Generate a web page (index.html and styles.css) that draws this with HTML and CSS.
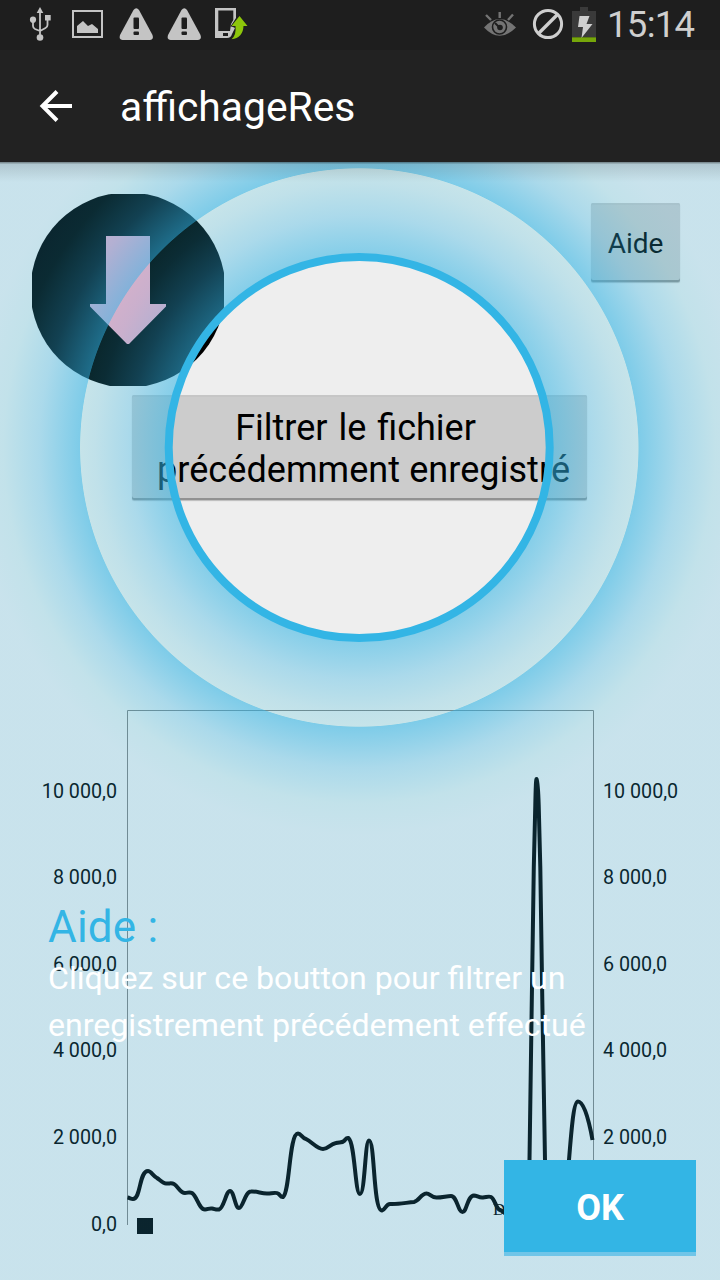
FILE: index.html
```html
<!DOCTYPE html>
<html lang="fr">
<head>
<meta charset="utf-8">
<title>affichageRes</title>
<link rel="stylesheet" href="styles.css">
</head>
<body>
<header class="status">
  <svg class="status-icons" viewBox="0 0 260 50" width="260" height="50">
    <g fill="none" stroke="#c4c4c4" stroke-width="1.8">
      <path d="M40 12V37M33 21V26Q33 28 35 29L40 31M47.500 20V25Q47.500 27 45.500 28L40 31"/>
    </g>
    <g fill="#c4c4c4">
      <path d="M40 7L43.300 13H36.700Z"/><circle cx="33" cy="19.700" r="3.100"/><rect x="45" y="15" width="5.700" height="5.500"/><circle cx="40" cy="37.500" r="3.300"/>
      <path d="M77 33V26L83 21L88 26L92 24L98 29V33Z"/>
      <path d="M133.500 10Q136.300 6.500 139 10L152.500 35Q154 39.500 150 40H122.500Q118.500 39.500 120 35Z"/>
      <path d="M181.500 10Q184.300 6.500 187 10L200.500 35Q202 39.500 198 40H170.500Q166.500 39.500 168 35Z"/>
      <path fill-rule="evenodd" d="M215 8H236V18L231 26L235 28L232 34Q231 38 227 38H215ZM218.300 10.500V31H230L231 24L233.300 20V10.500ZM223 33V36H228V33Z"/>
    </g>
    <rect x="73" y="11" width="29" height="26" fill="none" stroke="#c4c4c4" stroke-width="2"/>
    <g fill="#1e1e1e"><rect x="133.500" y="17.500" width="5.500" height="11.500" rx="1"/><rect x="133.500" y="31.500" width="5.500" height="3.500" rx="1"/><rect x="181.500" y="17.500" width="5.500" height="11.500" rx="1"/><rect x="181.500" y="31.500" width="5.500" height="3.500" rx="1"/></g>
    <path d="M239.500 16L247.500 26H243.500Q243 38 231.500 39.300Q236.500 35 235.500 26H231.500Z" fill="#8dc60b" stroke="#1e1e1e" stroke-width="1.200" paint-order="stroke"/>
  </svg>
  <svg class="status-icons" viewBox="480 0 120 50" width="120" height="50">
    <path d="M484 27.500Q499.500 10.500 516 27.500Q499.500 44 484 27.500Z" fill="#747474"/>
    <circle cx="499.500" cy="27" r="7" fill="none" stroke="#1e1e1e" stroke-width="1.600"/>
    <circle cx="500" cy="27.500" r="2.800" fill="#1e1e1e"/>
    <path d="M495 23L499 27" stroke="#1e1e1e" stroke-width="2"/>
    <path d="M486 15L491 20M499.700 12V18M513 14.500L508 20" stroke="#747474" stroke-width="2.400"/>
    <circle cx="548" cy="24" r="13.600" fill="none" stroke="#cfcfcf" stroke-width="3"/>
    <path d="M538.500 33.500L557.500 14.500" stroke="#cfcfcf" stroke-width="3.400"/>
    <path d="M572 11H580V7H588V11H596V37H572Z" fill="#3a3a3a"/>
    <rect x="572" y="37.300" width="24" height="4.700" fill="#76a60a"/>
    <path d="M579.500 16H589.500L586.500 24H592.500L581.500 38L583 27H578Z" fill="#cfcfcf"/>
  </svg>
  <span class="clock">15:14</span>
</header>
<nav class="actionbar">
  <svg class="back" viewBox="0 0 36 36" width="36" height="36"><path d="M35 18H6M20 3.500L5.500 18L20 32.500" fill="none" stroke="#fff" stroke-width="4"/></svg>
  <h1 class="title">affichageRes</h1>
</nav>
<main class="screen">
  <div class="tools">
    <svg class="download" viewBox="0 0 192 192" width="192" height="192">
      <circle cx="96" cy="96" r="97.500" fill="#000"/>
      <path d="M74 42H118V110H134V112.500L97 150H95L58 112.500V110H74Z" fill="#fbadc8"/>
    </svg>
    <button class="btn btn-help">Aide</button>
  </div>
  <button class="btn btn-filter"><span class="line line-first">Filtrer le fichier</span><span class="line">précédemment enregistré</span></button>
  <svg class="chart" viewBox="0 700 720 580" width="720" height="580">
    <text class="tick end" x="117" y="798">10 000,0</text><text class="tick" x="603" y="798">10 000,0</text>
    <text class="tick end" x="117" y="884">8 000,0</text><text class="tick" x="603" y="884">8 000,0</text>
    <text class="tick end" x="117" y="971">6 000,0</text><text class="tick" x="603" y="971">6 000,0</text>
    <text class="tick end" x="117" y="1057">4 000,0</text><text class="tick" x="603" y="1057">4 000,0</text>
    <text class="tick end" x="117" y="1144">2 000,0</text><text class="tick" x="603" y="1144">2 000,0</text>
    <text class="tick end" x="117" y="1231">0,0</text>
    <path class="frame" d="M127.500 1225V710.500H593.500V1225"/>
    <rect x="137" y="1218" width="16" height="16"/>
    <text class="caption" x="493" y="1215">D</text>
    <path class="series" d="M127.500 1197.500C130 1198 131 1199 133 1199C141 1199 139 1171 148 1171C151 1171 153 1176 157 1178C160 1180 163 1183.500 166 1183.500C169 1184 171 1182.500 174 1184C178 1186 180 1193 185 1193C188 1193 189 1191.500 192 1193C197 1196 199 1209.500 205 1209.500C208 1209.500 209 1208 212 1208.500C215 1209 216 1210 219 1209.500C224 1208 226 1191 230 1191C234 1191 235 1208 239 1208C243 1208 245 1191.500 251 1191.500C257 1191 262 1194 268 1193.500C271 1193.500 276 1192 278 1193.500C280 1194.500 280.500 1197.500 283 1197C290 1192 289 1133.500 298 1133.500C301 1133.500 302 1138 306 1139C312 1142 317 1149 323 1149C328 1149 330 1144 336 1143C339 1142 342 1143 344 1141C346 1139 346 1137.500 348.500 1138C355 1143 355 1194 360 1194C365 1194 365 1140.500 369 1140.500C375 1140.500 373 1211 382 1210.500C385 1210 386 1204 390 1204C398 1204.500 407 1202.500 414 1202C419 1201 421 1194 426 1193.500C430 1193 431 1198 437 1197.500C442 1197.500 447 1196 451 1196C457 1196 458 1212 462.500 1212C467 1212 467 1196 474 1195.500C477 1195.500 479 1198 483 1197.500C487 1197 489 1196 491 1197C495 1199 496 1209 500 1210C512 1214 524 1250 529.500 1160L531.800 1000L533.800 867L535.300 805Q535.800 779 536.500 779Q538 783 538.700 805L540.300 867L542.300 1000L545 1160C550 1270 562 1240 569 1160C572 1122 574 1101.500 578 1101.500C583 1101.500 588 1115 592.500 1140"/>
  </svg>
  <svg class="showcase" viewBox="0 162 720 1118" width="720" height="1118">
    <defs>
      <linearGradient id="shade" x1="0" y1="0" x2="0" y2="1"><stop offset="0" stop-color="#000" stop-opacity=".45"/><stop offset=".12" stop-color="#000" stop-opacity=".12"/><stop offset="1" stop-color="#000" stop-opacity="0"/></linearGradient>
      <radialGradient id="glow" gradientUnits="userSpaceOnUse" cx="359.300" cy="447.500" r="400">
        <stop offset=".475" stop-color="#33b5e5" stop-opacity=".58"/>
        <stop offset=".58" stop-color="#33b5e5" stop-opacity=".36"/>
        <stop offset=".66" stop-color="#2fb8dc" stop-opacity=".24"/>
        <stop offset=".697" stop-color="#2fbcd8" stop-opacity=".21"/>
        <stop offset=".699" stop-color="#33b5e5" stop-opacity=".6"/>
        <stop offset=".8" stop-color="#33b5e5" stop-opacity=".36"/>
        <stop offset=".89" stop-color="#2fb9dd" stop-opacity=".23"/>
        <stop offset=".97" stop-color="#33b5e5" stop-opacity=".2"/>
      </radialGradient>
    </defs>
    <path fill="url(#glow)" fill-rule="evenodd" d="M0 162H720V1280H0ZM168 447.500A191 191 0 0 0 550 447.500A191 191 0 0 0 168 447.500Z"/>
    <circle cx="359.200" cy="447.600" r="190.500" fill="none" stroke="#33b5e5" stroke-width="8"/>
    <rect x="0" y="162" width="720" height="20" fill="url(#shade)"/>
  </svg>
  <section class="help">
    <h2 class="help-title">Aide :</h2>
    <p class="help-text">Cliquez sur ce boutton pour filtrer un<br>enregistrement précédement effectué</p>
  </section>
  <button class="ok">OK</button>
</main>
</body>
</html>
```
FILE: styles.css
```css
body {
  margin: 0;
  width: 720px;
  height: 1280px;
  overflow: hidden;
  background: #eee;
  font-family: Roboto, "Noto Sans", sans-serif;
}
.status {
  display: flex;
  height: 50px;
  background: #1e1e1e;
}
.status-icons + .status-icons { margin-left: 220px; }
.clock {
  margin-left: 7px;
  color: #cfcfcf;
  font-size: 36.5px;
  letter-spacing: -0.7px;
  line-height: 49px;
}
.actionbar {
  display: flex;
  align-items: center;
  height: 112px;
  padding-left: 37px;
  background: #222;
  color: #fff;
}
.title {
  margin: 2px 0 0 47px;
  font-size: 40.8px;
  font-weight: 400;
}
.screen {
  position: relative;
  display: flex;
  flex-direction: column;
  align-items: center;
  height: 1118px;
}
.tools {
  display: flex;
  justify-content: space-between;
  align-items: flex-start;
  box-sizing: border-box;
  width: 720px;
  padding: 32px 40px 0 32px;
}
.download { display: block; }
.btn {
  box-sizing: border-box;
  padding: 2px 0 0;
  border: 0;
  border-radius: 2px;
  background: #ccc;
  box-shadow: inset 0 2px 0 #c6c6c6, inset 0 -2px 0 #929292, 0 1px 1px #bbb;
  color: #000;
  font-family: inherit;
}
.btn-help {
  width: 89px;
  height: 79px;
  margin-top: 9px;
  font-size: 28px;
}
.btn-filter {
  width: 455px;
  height: 105px;
  margin: 9px 1px 0 0;
  font-size: 36px;
  line-height: 42px;
}
.line { display: block; white-space: nowrap; padding-left: 8px; letter-spacing: 0.07px; }
.line-first { padding: 0 8px 0 0; letter-spacing: normal; word-spacing: 2px; }
.chart { display: block; margin-top: 200px; flex: none; }
.tick { font-size: 19.7px; }
.end { text-anchor: end; }
.caption { font: 17px "Liberation Serif", serif; }
.frame { fill: none; stroke: #808080; stroke-width: 1; }
.series { fill: none; stroke: #000; stroke-width: 4; stroke-linejoin: round; }
.showcase { position: absolute; inset: 0; }
.help {
  position: absolute;
  left: 48px;
  top: 738px;
  color: #fff;
}
.help-title {
  margin: 0;
  color: #33b5e5;
  font-size: 44px;
  font-weight: 400;
  line-height: 54px;
  letter-spacing: 0.2px;
}
.help-text {
  margin: 1px 0 0;
  font-size: 32.1px;
  line-height: 47px;
  white-space: nowrap;
}
.ok {
  position: absolute;
  right: 24px;
  bottom: 24px;
  box-sizing: border-box;
  width: 192px;
  height: 96px;
  padding: 3px 0 0;
  border: 0;
  border-bottom: 4px solid #70c5e8;
  background: #33b5e5;
  color: #fff;
  font: bold 36px Roboto, sans-serif;
}
```
